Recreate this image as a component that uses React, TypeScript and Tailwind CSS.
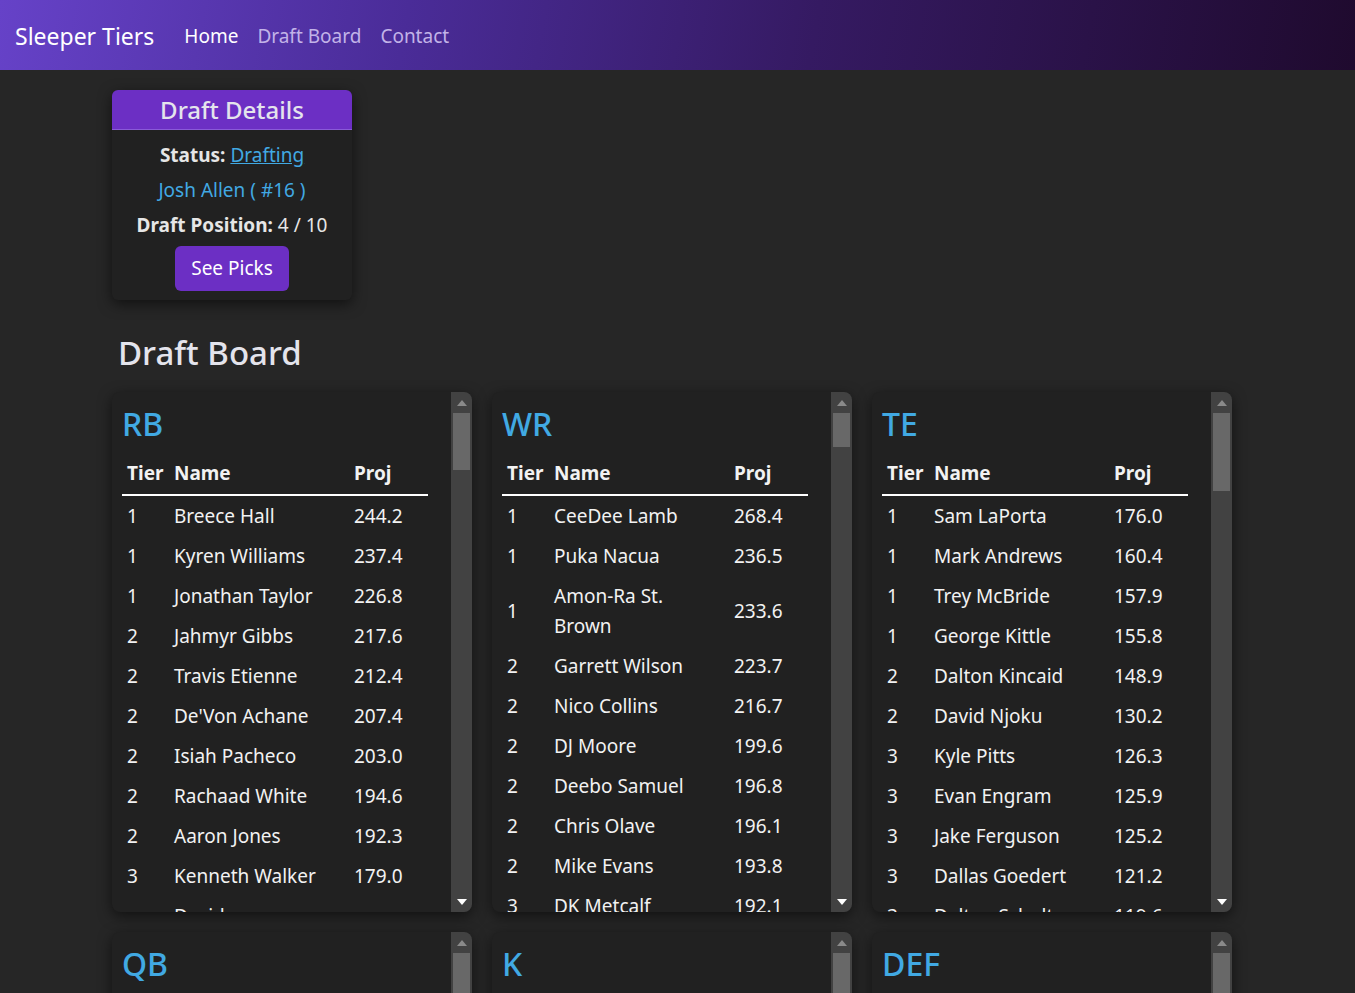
import React from "react";

type Row = [number, string, string];

const RB: Row[] = [
  [1, "Breece Hall", "244.2"],
  [1, "Kyren Williams", "237.4"],
  [1, "Jonathan Taylor", "226.8"],
  [2, "Jahmyr Gibbs", "217.6"],
  [2, "Travis Etienne", "212.4"],
  [2, "De'Von Achane", "207.4"],
  [2, "Isiah Pacheco", "203.0"],
  [2, "Rachaad White", "194.6"],
  [2, "Aaron Jones", "192.3"],
  [3, "Kenneth Walker", "179.0"],
  [3, "David Montgomery", "176.4"],
  [3, "James Cook", "174.1"],
];

const WR: Row[] = [
  [1, "CeeDee Lamb", "268.4"],
  [1, "Puka Nacua", "236.5"],
  [1, "Amon-Ra St. Brown", "233.6"],
  [2, "Garrett Wilson", "223.7"],
  [2, "Nico Collins", "216.7"],
  [2, "DJ Moore", "199.6"],
  [2, "Deebo Samuel", "196.8"],
  [2, "Chris Olave", "196.1"],
  [2, "Mike Evans", "193.8"],
  [3, "DK Metcalf", "192.1"],
  [3, "Davante Adams", "190.5"],
];

const TE: Row[] = [
  [1, "Sam LaPorta", "176.0"],
  [1, "Mark Andrews", "160.4"],
  [1, "Trey McBride", "157.9"],
  [1, "George Kittle", "155.8"],
  [2, "Dalton Kincaid", "148.9"],
  [2, "David Njoku", "130.2"],
  [3, "Kyle Pitts", "126.3"],
  [3, "Evan Engram", "125.9"],
  [3, "Jake Ferguson", "125.2"],
  [3, "Dallas Goedert", "121.2"],
  [3, "Dalton Schultz", "119.6"],
];

const QB: Row[] = [
  [1, "Josh Allen", "380.2"],
  [1, "Jalen Hurts", "372.5"],
  [1, "Lamar Jackson", "360.1"],
  [2, "Patrick Mahomes", "344.7"],
];

const K: Row[] = [
  [1, "Justin Tucker", "148.0"],
  [1, "Brandon Aubrey", "145.2"],
  [2, "Harrison Butker", "140.6"],
  [2, "Jake Elliott", "138.9"],
];

const DEF: Row[] = [
  [1, "49ers", "130.0"],
  [1, "Cowboys", "128.4"],
  [2, "Jets", "120.3"],
  [2, "Ravens", "118.7"],
];

function UpArrow({ color }: { color: string }) {
  return (
    <svg width="10" height="6" viewBox="0 0 10 6">
      <polygon points="5,0 10,6 0,6" fill={color} />
    </svg>
  );
}

function DownArrow({ color }: { color: string }) {
  return (
    <svg width="10" height="6" viewBox="0 0 10 6">
      <polygon points="0,0 10,0 5,6" fill={color} />
    </svg>
  );
}

function Scrollbar({ thumb }: { thumb: number }) {
  return (
    <div className="w-[21px] shrink-0 bg-[#424242] flex flex-col">
      <div className="h-[21px] flex items-center justify-center">
        <UpArrow color="#8a8a8a" />
      </div>
      <div className="mx-[2px] bg-[#686868]" style={{ height: thumb }} />
      <div className="flex-1" />
      <div className="h-[21px] flex items-center justify-center">
        <DownArrow color="#ffffff" />
      </div>
    </div>
  );
}

function PosCard({ title, rows, thumb }: { title: string; rows: Row[]; thumb: number }) {
  return (
    <div className="h-[520px] flex rounded-[8px] overflow-hidden bg-[#212121] shadow-[0_4px_14px_rgba(0,0,0,0.55)]">
      <div className="flex-1 overflow-hidden pl-[10px] pt-[13px]">
        <div className="text-[32px] leading-[38px] font-medium text-[#41a9e3] mb-[11px]">{title}</div>
        <table className="w-[306px] border-collapse table-fixed text-[#f2f2f2]">
          <colgroup>
            <col className="w-[52px]" />
            <col className="w-[180px]" />
            <col className="w-[74px]" />
          </colgroup>
          <thead>
            <tr className="border-b-2 border-white">
              <th className="text-left font-bold text-[19px] leading-[30px] pt-[4px] pb-[6px] pl-[5px]">Tier</th>
              <th className="text-left font-bold text-[19px] leading-[30px] pt-[4px] pb-[6px]">Name</th>
              <th className="text-left font-bold text-[19px] leading-[30px] pt-[4px] pb-[6px]">Proj</th>
            </tr>
          </thead>
          <tbody>
            {rows.map((r, i) => (
              <tr key={i}>
                <td className="text-[19px] leading-[30px] py-[5px] pl-[5px] align-middle">{r[0]}</td>
                <td className="text-[19px] leading-[30px] py-[5px] pr-[20px] align-middle">{r[1]}</td>
                <td className="text-[19px] leading-[30px] py-[5px] align-middle">{r[2]}</td>
              </tr>
            ))}
          </tbody>
        </table>
      </div>
      <Scrollbar thumb={thumb} />
    </div>
  );
}

export default function App() {
  return (
    <div className="min-h-screen bg-[#262626] font-['Noto_Sans','Open_Sans',sans-serif] text-[#e6e6e6] pb-[40px]">
      <nav className="h-[70px] flex items-center px-[15px] pt-[2px] bg-[linear-gradient(100deg,#6642c8_0%,#4a2c98_30%,#351a62_60%,#1f0a2e_100%)]">
        <span className="text-[23px] text-white mr-[30px]">Sleeper Tiers</span>
        <div className="flex gap-[19px] text-[19px]">
          <span className="text-white">Home</span>
          <span className="text-[#c2b3e8]">Draft Board</span>
          <span className="text-[#c2b3e8]">Contact</span>
        </div>
      </nav>
      <main className="pl-[112px] pt-[20px]">
        <div className="w-[240px] rounded-[6px] overflow-hidden bg-[#212121] shadow-[0_4px_14px_rgba(0,0,0,0.55)]">
          <div className="h-[40px] bg-[#6c2fc4] flex items-center justify-center text-[24px] font-medium text-[#e4e4ec] border-b border-[#8a5ad8]">
            Draft Details
          </div>
          <div className="flex flex-col items-center pt-[8px] pb-[9px] text-[19px]">
            <div className="leading-[35px]">
              <span className="font-bold">Status: </span>
              <span className="text-[#41a9e3] underline">Drafting</span>
            </div>
            <div className="leading-[35px] text-[#41a9e3]">Josh Allen ( #16 )</div>
            <div className="leading-[35px]">
              <span className="font-bold">Draft Position: </span>4 / 10
            </div>
            <button className="mt-[3px] h-[45px] px-[16px] rounded-[6px] bg-[#6c2fc4] text-white text-[19px]">
              See Picks
            </button>
          </div>
        </div>
        <h2 className="mt-[33px] ml-[6px] text-[33px] leading-[40px] font-medium text-[#e4e4ec]">Draft Board</h2>
        <div className="mt-[19px] grid grid-cols-[360px_360px_360px] gap-[20px]">
          <PosCard title="RB" rows={RB} thumb={57} />
          <PosCard title="WR" rows={WR} thumb={34} />
          <PosCard title="TE" rows={TE} thumb={78} />
          <PosCard title="QB" rows={QB} thumb={120} />
          <PosCard title="K" rows={K} thumb={140} />
          <PosCard title="DEF" rows={DEF} thumb={130} />
        </div>
      </main>
    </div>
  );
}
